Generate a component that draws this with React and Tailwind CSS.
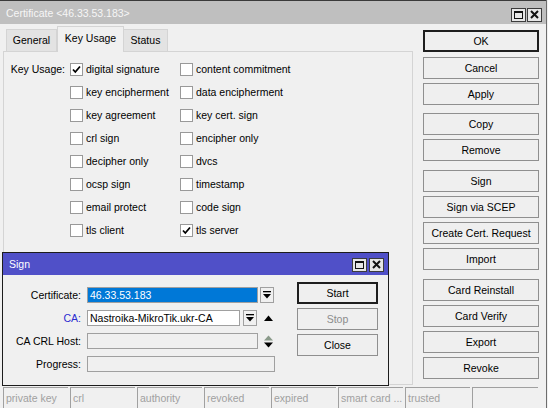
import React from "react";

function TitleBtn({ type }) {
  return (
    <div className="w-[15px] h-[14px] border border-[#3c3c3c] bg-[#e6e6e6] flex items-center justify-center">
      {type === "max" ? (
        <svg width="9" height="8" viewBox="0 0 9 8">
          <rect x="0.5" y="0.5" width="8" height="7" fill="none" stroke="#111" strokeWidth="1" />
          <rect x="0" y="0" width="9" height="2" fill="#111" />
        </svg>
      ) : (
        <svg width="9" height="9" viewBox="0 0 9 9">
          <path d="M1 1 L8 8 M8 1 L1 8" stroke="#111" strokeWidth="2" />
        </svg>
      )}
    </div>
  );
}

function Check({ checked }) {
  return (
    <div className="w-[13px] h-[13px] border border-[#999999] bg-white flex items-center justify-center shrink-0">
      {checked && (
        <svg width="9" height="9" viewBox="0 0 9 9">
          <path d="M1 4.5 L3.3 7 L8 1.5" stroke="#000" strokeWidth="1.8" fill="none" />
        </svg>
      )}
    </div>
  );
}

function Btn({ children, def, disabled, w = "w-[116px]" }) {
  return (
    <div
      className={`${w} h-[22px] flex items-center justify-center bg-[#efefef] ${
        def ? "border-2 border-[#1e1e1e]" : "border border-[#8f8f8f]"
      } ${disabled ? "text-[#8c8c8c]" : "text-black"}`}
    >
      {children}
    </div>
  );
}

function DropBtn() {
  return (
    <div className="w-[14px] h-[16px] border border-[#a0a0a0] bg-[#f0f0f0] flex items-center justify-center shrink-0">
      <svg width="8" height="8" viewBox="0 0 8 8">
        <rect x="0" y="0" width="8" height="1.3" fill="#000" />
        <polygon points="0,3 8,3 4,7.5" fill="#000" />
      </svg>
    </div>
  );
}

const keyRows = [
  ["digital signature", true, "content commitment", false],
  ["key encipherment", false, "data encipherment", false],
  ["key agreement", false, "key cert. sign", false],
  ["crl sign", false, "encipher only", false],
  ["decipher only", false, "dvcs", false],
  ["ocsp sign", false, "timestamp", false],
  ["email protect", false, "code sign", false],
  ["tls client", false, "tls server", true],
];

const statusCells = ["private key", "crl", "authority", "revoked", "expired", "smart card ...", "trusted", ""];

export default function App() {
  return (
    <div className="w-[548px] h-[408px] bg-[#f0f0f0] overflow-hidden relative font-['Liberation_Sans',Arial,sans-serif] text-[10.5px] leading-none text-black">
      <div className="w-[547px] h-full border-r border-[#6d6d6d] flex flex-col">
        {/* Title bar */}
        <div className="h-[24px] shrink-0 border-t border-[#3a3a3a] bg-[#bfbfbf] flex items-center pl-[6px] pr-[4px] text-[#f6f6f6]">
          <span className="flex-1 mt-[1px]">Certificate &lt;46.33.53.183&gt;</span>
          <div className="flex gap-[1px] mt-[4px]">
            <TitleBtn type="max" />
            <TitleBtn type="close" />
          </div>
        </div>

        {/* Body */}
        <div className="flex h-[362px] shrink-0">
          <div className="ml-[3px] w-[410px] flex flex-col">
            <div className="h-[27px] flex items-end pl-[3px]">
              <div className="w-[51px] h-[22px] bg-[#e3e3e3] border border-[#d4d4d4] border-b-0 flex items-center justify-center">General</div>
              <div className="w-[67px] h-[26px] bg-[#f0f0f0] border border-[#d4d4d4] border-b-0 flex items-center justify-center pb-[3px] relative top-[1px]">Key Usage</div>
              <div className="w-[44px] h-[22px] bg-[#e3e3e3] border border-[#d4d4d4] border-b-0 border-l-0 flex items-center justify-center">Status</div>
            </div>
            <div className="h-[334px] border border-[#d4d4d4] pt-[6px]">
              {keyRows.map((r, i) => (
                <div key={i} className="h-[23px] flex items-center">
                  <div className="w-[66px] pr-[5px] text-right">{i === 0 ? "Key Usage:" : ""}</div>
                  <div className="w-[110px] flex items-center gap-[3px]">
                    <Check checked={r[1]} />
                    <span>{r[0]}</span>
                  </div>
                  <div className="flex items-center gap-[3px]">
                    <Check checked={r[3]} />
                    <span>{r[2]}</span>
                  </div>
                </div>
              ))}
            </div>
          </div>
          <div className="ml-[10px] pt-[6px] flex flex-col">
            <Btn def>OK</Btn>
            <div className="mt-[5px]"><Btn>Cancel</Btn></div>
            <div className="mt-[4px]"><Btn>Apply</Btn></div>
            <div className="mt-[8px]"><Btn>Copy</Btn></div>
            <div className="mt-[4px]"><Btn>Remove</Btn></div>
            <div className="mt-[9px]"><Btn>Sign</Btn></div>
            <div className="mt-[4px]"><Btn>Sign via SCEP</Btn></div>
            <div className="mt-[4px]"><Btn>Create Cert. Request</Btn></div>
            <div className="mt-[4px]"><Btn>Import</Btn></div>
            <div className="mt-[9px]"><Btn>Card Reinstall</Btn></div>
            <div className="mt-[4px]"><Btn>Card Verify</Btn></div>
            <div className="mt-[4px]"><Btn>Export</Btn></div>
            <div className="mt-[4px]"><Btn>Revoke</Btn></div>
          </div>
        </div>

        {/* Status bar */}
        <div className="h-[22px] flex pl-[3px] pt-[1px] gap-[2px]">
          {statusCells.map((c, i) => (
            <div
              key={i}
              className={`${i === 7 ? "w-[66px]" : "w-[65px]"} h-full border-l border-t border-[#a0a0a0] flex items-center pl-[2px] text-[#a0a0a0] whitespace-nowrap overflow-hidden`}
            >
              {c}
            </div>
          ))}
        </div>
      </div>

      {/* Sign dialog */}
      <div className="absolute left-[2px] top-[252px] w-[387px] h-[134px] border border-[#1c1c1c] bg-[#f0f0f0] flex flex-col">
        <div className="h-[22px] shrink-0 bg-[#5050c8] flex items-center pl-[6px] pr-[4px] text-white">
          <span className="flex-1">Sign</span>
          <div className="flex gap-[2px] mt-[1px]">
            <TitleBtn type="max" />
            <TitleBtn type="close" />
          </div>
        </div>
        <div className="flex">
          <div className="w-[294px] pt-[12px] flex flex-col gap-[7px]">
            <div className="h-[16px] flex items-center">
              <div className="w-[78px] text-right mr-[6px]">Certificate:</div>
              <div className="w-[171px] h-[16px] border border-[#a0a0a0] bg-[#0078d7] text-white flex items-center pl-[2px]">46.33.53.183</div>
              <div className="ml-[2px]"><DropBtn /></div>
            </div>
            <div className="h-[16px] flex items-center">
              <div className="w-[78px] text-right mr-[6px] text-[#2b2bd0]">CA:</div>
              <div className="w-[153px] h-[16px] border border-[#a0a0a0] bg-white flex items-center pl-[2px]">Nastroika-MikroTik.ukr-CA</div>
              <div className="ml-[3px]"><DropBtn /></div>
              <svg className="ml-[7px]" width="9" height="6" viewBox="0 0 9 6">
                <polygon points="0,6 9,6 4.5,0.5" fill="#000" />
              </svg>
            </div>
            <div className="h-[16px] flex items-center">
              <div className="w-[78px] text-right mr-[6px]">CA CRL Host:</div>
              <div className="w-[171px] h-[16px] border border-[#a0a0a0] bg-[#f0f0f0]"></div>
              <svg className="ml-[6px]" width="9" height="13" viewBox="0 0 9 13">
                <polygon points="0,5.5 9,5.5 4.5,0.5" fill="#8a9a8a" />
                <polygon points="0,7.5 9,7.5 4.5,12.5" fill="#000" />
              </svg>
            </div>
            <div className="h-[16px] flex items-center">
              <div className="w-[78px] text-right mr-[6px]">Progress:</div>
              <div className="w-[188px] h-[16px] border border-[#a0a0a0] bg-[#f0f0f0]"></div>
            </div>
          </div>
          <div className="pt-[7px] flex flex-col gap-[4px]">
            <Btn def w="w-[81px]">Start</Btn>
            <Btn disabled w="w-[81px]">Stop</Btn>
            <Btn w="w-[81px]">Close</Btn>
          </div>
        </div>
      </div>
    </div>
  );
}
